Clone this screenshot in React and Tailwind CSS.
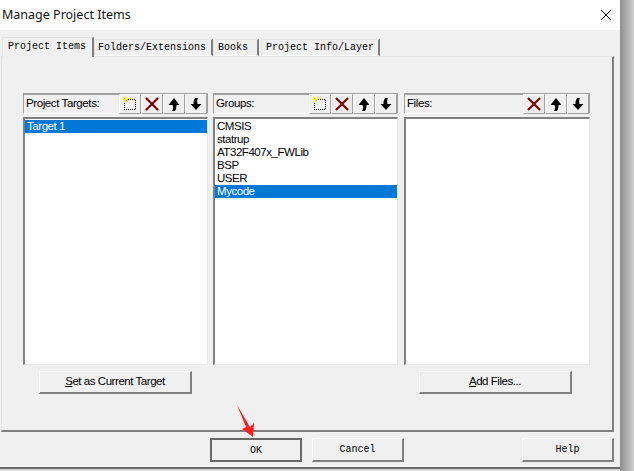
import React from "react";

const MONO = "font-['Liberation_Mono',monospace]";
const SANS = "font-['Liberation_Sans',Arial,sans-serif]";

function NewIcon() {
  return (
    <svg width="16" height="16" viewBox="0 0 16 16" shapeRendering="crispEdges">
      <path d="M6 3.5H13.5V13.5H2.5V7" fill="none" stroke="#000" strokeDasharray="1 1" />
      <path d="M1 3h1v1H1zM3 0h1v6H3zM0 3h6v1H0zM5 1h1v1H5zM1 1h1v1H1zM1 5h1v1H1zM5 5h1v1H5zM7 2h2v1H7z" fill="#ffff00" />
      <path d="M2 2h1v1H2zM4 4h1v1H4z" fill="#a8a830" />
    </svg>
  );
}

function DeleteIcon() {
  return (
    <svg width="16" height="16" viewBox="0 0 16 16">
      <path d="M2 2L14 14M14 2L2 14" stroke="#800000" strokeWidth="2.2" fill="none" />
    </svg>
  );
}

function UpIcon() {
  return (
    <svg width="14" height="14" viewBox="0 0 14 14">
      <path d="M7 1L12.5 8H9.5Q9.5 12 8 14H5Q7 11.5 5.5 8H1.5Z" fill="#000" />
    </svg>
  );
}

function DownIcon() {
  return (
    <svg width="14" height="14" viewBox="0 0 14 14">
      <path d="M7 13L1.5 7H4.5Q4.5 3 6 1H9Q7.5 3.5 8.5 7H12.5Z" fill="#000" />
    </svg>
  );
}

function ToolButton({ children }) {
  return (
    <div className="w-[22px] h-[20px] flex items-center justify-center bg-[#f0f0f0] border-t border-l border-t-white border-l-white border-r border-b border-r-[#a0a0a0] border-b-[#a0a0a0]">
      {children}
    </div>
  );
}

function ListPanel({ title, tools, items, selected, className }) {
  return (
    <div className={"flex flex-col " + className}>
      <div className="h-[21px] flex items-center justify-between border-t-2 border-l border-r border-t-[#a0a0a0] border-l-[#a0a0a0] border-r-[#a0a0a0] border-b border-b-white">
        <span className={SANS + " text-[11.5px] text-black pl-[2px] tracking-[-0.4px]"}>{title}</span>
        <div className="flex">
          {tools.map((t, i) => (
            <ToolButton key={i}>{t}</ToolButton>
          ))}
        </div>
      </div>
      <div className="mt-[3px] h-[248px] bg-white border-t-2 border-l-2 border-t-[#808080] border-l-[#808080] border-r border-b border-r-[#e8e8e8] border-b-[#e8e8e8] pt-[1px]">
        {items.map((item) => (
          <div
            key={item}
            className={
              SANS +
              " h-[13px] leading-[13px] text-[11.5px] pl-[2px] tracking-[-0.45px] " +
              (item === selected ? "bg-[#0078d7] text-white" : "text-black")
            }
          >
            {item}
          </div>
        ))}
      </div>
    </div>
  );
}

function Tab({ label, width, active, className = "" }) {
  return (
    <div
      className={
        MONO +
        " text-[10px] text-black flex items-center border-t border-l border-t-[#e3e3e3] border-l-[#e3e3e3] border-r-2 border-r-[#808080] bg-[#f0f0f0] " +
        (active ? "h-[20px] relative z-10 -mb-px pb-[3px] " : "h-[17px] mt-[2px] border-b border-b-white ") +
        className
      }
      style={{ width }}
    >
      {label}
    </div>
  );
}

function DialogButton({ label, width, strong, className = "" }) {
  return (
    <button
      className={
        MONO +
        " h-[24px] text-[10px] text-black bg-[#f0f0f0] " +
        (strong
          ? "border-2 border-[#696969] "
          : "border-t border-l border-t-white border-l-white border-r-2 border-b-2 border-r-[#808080] border-b-[#808080] ") +
        className
      }
      style={{ width }}
    >
      {label}
    </button>
  );
}

function ActionButton({ width, first, rest, className = "" }) {
  return (
    <button
      className={
        SANS +
        " h-[23px] text-[11.5px] tracking-[-0.45px] text-black bg-[#f0f0f0] border-t border-l border-t-white border-l-white border-r-2 border-b-2 border-r-[#808080] border-b-[#808080] " +
        className
      }
      style={{ width }}
    >
      <span className="underline">{first}</span>
      {rest}
    </button>
  );
}

export default function App() {
  return (
    <div className="relative w-[634px] h-[471px] overflow-hidden flex bg-[#d8d8d8]">
      <div className="w-[620px] h-[469px] flex flex-col bg-[#f0f0f0] border-b-2 border-b-[#696969]">
        {/* title bar */}
        <div className="h-[30px] bg-white flex items-center justify-between pl-[2px] pr-[8px]">
          <span className="font-['Noto_Sans',sans-serif] text-[12.5px] text-[#111]">Manage Project Items</span>
          <svg width="12" height="12" viewBox="0 0 12 12">
            <path d="M1 1L11 11M11 1L1 11" stroke="#111" strokeWidth="1" fill="none" />
          </svg>
        </div>

        {/* tabs */}
        <div className="flex items-start pl-[2px] h-[19px] mt-[7px]">
          <Tab label="Project Items" width={92} active className="pl-[5px]" />
          <Tab label="Folders/Extensions" width={119} className="pl-[3px]" />
          <Tab label="Books" width={46} className="pl-[4px]" />
          <Tab label="Project Info/Layer" width={119} className="ml-[2px] pl-[4px]" />
        </div>

        {/* tab page */}
        <div className="ml-[1px] w-[613px] h-[376px] border-t border-l border-t-[#e3e3e3] border-l-[#e3e3e3] border-r-2 border-b-2 border-r-[#808080] border-b-[#808080] pt-[36px] pl-[21px]">
          <div className="flex">
            <ListPanel
              className="w-[185px]"
              title="Project Targets:"
              tools={[<NewIcon />, <DeleteIcon />, <UpIcon />, <DownIcon />]}
              items={["Target 1"]}
              selected="Target 1"
            />
            <ListPanel
              className="w-[185px] ml-[5px]"
              title="Groups:"
              tools={[<NewIcon />, <DeleteIcon />, <UpIcon />, <DownIcon />]}
              items={["CMSIS", "statrup", "AT32F407x_FWLib", "BSP", "USER", "Mycode"]}
              selected="Mycode"
            />
            <ListPanel
              className="w-[186px] ml-[6px]"
              title="Files:"
              tools={[<DeleteIcon />, <UpIcon />, <DownIcon />]}
              items={[]}
            />
          </div>
          <div className="flex mt-[6px]">
            <ActionButton width={153} first="S" rest="et as Current Target" className="ml-[16px]" />
            <ActionButton width={153} first="A" rest="dd Files..." className="ml-[227px]" />
          </div>
        </div>

        {/* bottom buttons */}
        <div className="flex mt-[6px] pl-[210px]">
          <DialogButton label="OK" width={92} strong />
          <DialogButton label="Cancel" width={92} className="ml-[10px]" />
          <DialogButton label="Help" width={92} className="ml-[118px]" />
        </div>
      </div>
      <div className="w-[14px] h-full bg-gradient-to-r from-[#8e8e8e] to-[#cfcfcf]" />

      {/* red annotation arrow */}
      <svg className="absolute left-[234px] top-[402px]" width="24" height="38" viewBox="0 0 24 38">
        <path d="M3 3L16 25L20 21L19 35L8 27L12 25Z" fill="#ff1e1e" />
      </svg>
    </div>
  );
}
